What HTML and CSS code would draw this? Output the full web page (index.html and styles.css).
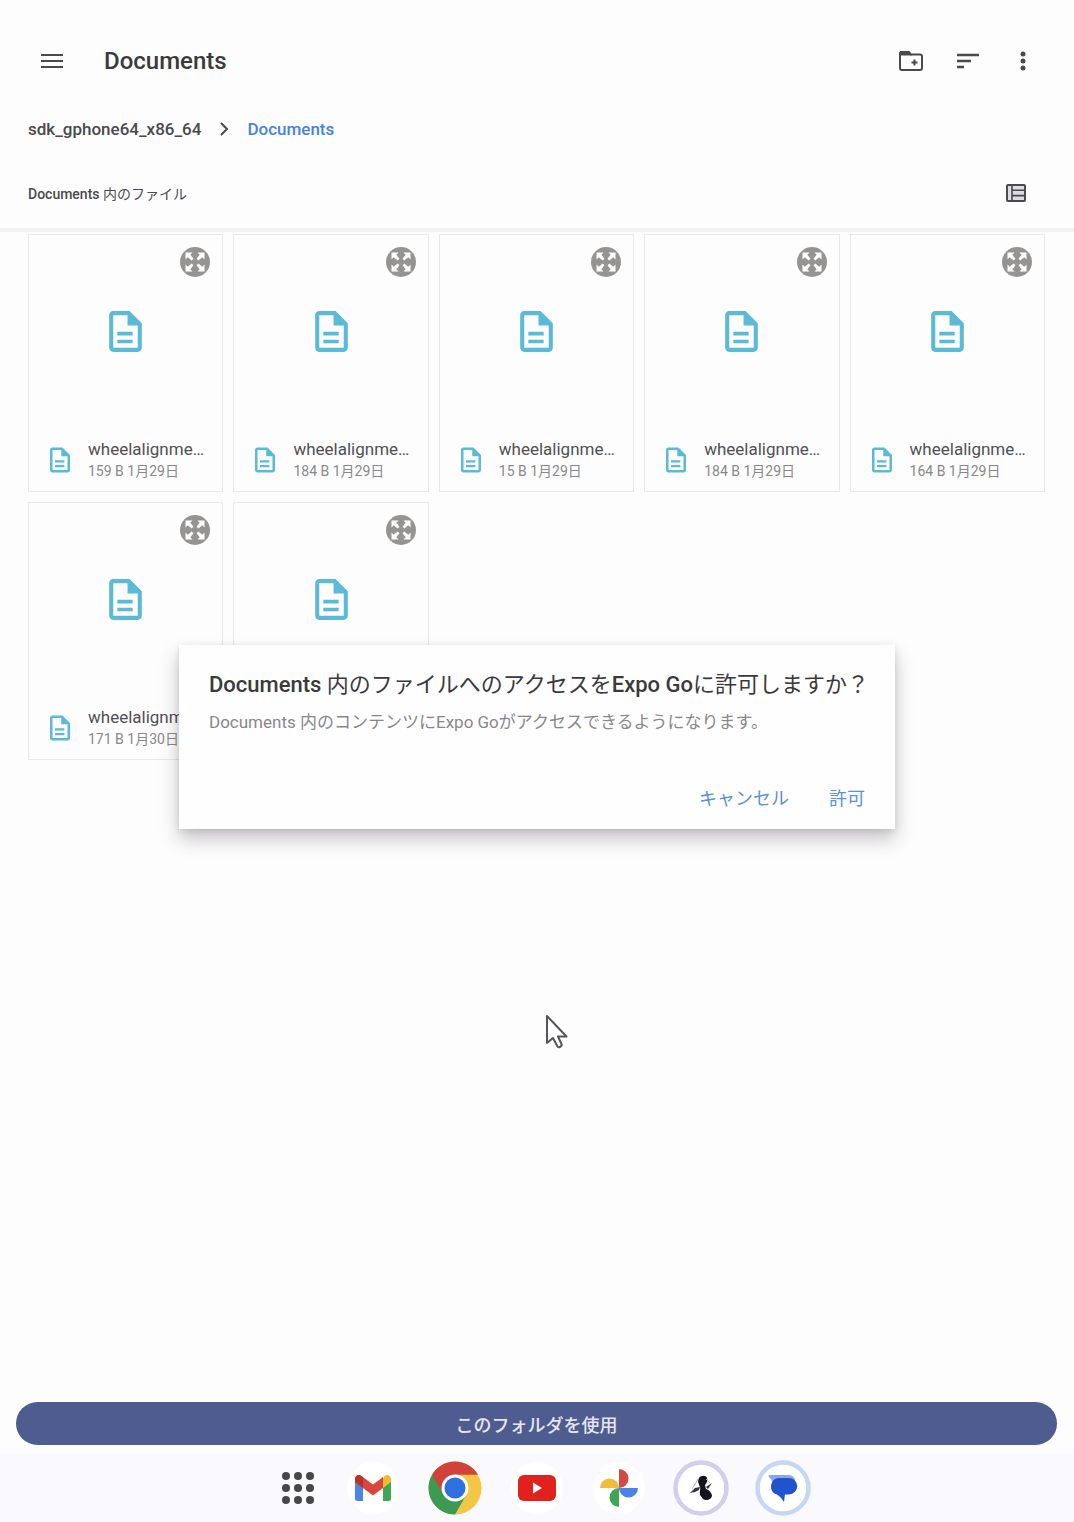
FILE: index.html
```html
<!DOCTYPE html>
<html lang="ja">
<head>
<meta charset="utf-8">
<meta name="viewport" content="width=device-width, initial-scale=1">
<title>Documents</title>
<link rel="stylesheet" href="styles.css">
</head>
<body>
<svg class="sprite" aria-hidden="true">
  <symbol id="doc" viewBox="0 0 24 24"><path d="M8 16h7.500v1.800H8zm0-3.900h7.500v1.800H8zM14 2H6c-1.100 0-2 .9-2 2v16c0 1.100.9 2 2 2h12c1.100 0 2-.9 2-2V8zm4 18H6V4h7v5h5z"/></symbol>
  <symbol id="expand" viewBox="0 0 30 30"><circle cx="15" cy="15" r="15" fill="#969492"/><path d="M5.500 5.500h7L10.300 7.700l3.200 4-1.800 1.800-4-3.200L5.500 12.500zM24.500 5.500v7l-2.200-2.200-4 3.200-1.800-1.800 3.200-4L17.500 5.500zM5.500 24.500v-7l2.200 2.200 4-3.200 1.800 1.800-3.200 4 2.200 2.200zM24.500 24.500h-7l2.200-2.200-3.200-4 1.800-1.800 4 3.200 2.200-2.200z" fill="#fff"/></symbol>
</svg>

<div class="picker">
  <header class="toolbar">
    <button class="icon-btn" aria-label="メニュー"><svg viewBox="0 0 28 28"><path d="M3 8h22M3 14h22M3 20h22" fill="none" stroke="currentColor" stroke-width="2"/></svg></button>
    <h1 class="title">Documents</h1>
    <div class="actions">
      <button class="icon-btn" aria-label="新しいフォルダ"><svg viewBox="0 0 28 28"><path d="M4 5h8l2 2.500h9a2 2 0 0 1 2 2V21a2 2 0 0 1-2 2H5a2 2 0 0 1-2-2V6z" fill="none" stroke="currentColor" stroke-width="2"/><path d="M3 4.500h9l3 4H3z" fill="currentColor"/><path d="M14.500 15.500h6M17.500 12.500v6" stroke="currentColor" stroke-width="2"/></svg></button>
      <button class="icon-btn" aria-label="並べ替え"><svg viewBox="0 0 28 28"><path d="M4 8h22M4 14h14M4 20h7" fill="none" stroke="currentColor" stroke-width="2.500"/></svg></button>
      <button class="icon-btn" aria-label="その他"><svg viewBox="0 0 28 28"><g fill="currentColor"><circle cx="14" cy="7" r="2.500"/><circle cx="14" cy="14" r="2.500"/><circle cx="14" cy="21" r="2.500"/></g></svg></button>
    </div>
  </header>

  <nav class="crumbs" aria-label="パス">
    <a href="#root">sdk_gphone64_x86_64</a>
    <svg class="chevron" viewBox="0 0 10 14"><path d="M2 1l6 6-6 6" fill="none" stroke="currentColor" stroke-width="2"/></svg>
    <a class="current" href="#documents">Documents</a>
  </nav>

  <div class="section-head">
    <h2 class="section-title"><strong>Documents</strong> 内のファイル</h2>
    <button class="icon-btn" aria-label="リスト表示"><svg viewBox="0 0 28 28"><rect x="5" y="6" width="18" height="16" rx="1" fill="#dcdce2" stroke="currentColor" stroke-width="2"/><path d="M10 6v16M10 11.300h13M10 16.600h13" fill="none" stroke="currentColor" stroke-width="1.600"/></svg></button>
  </div>

  <main class="grid">
    <article class="card">
      <button class="expand" aria-label="プレビュー"><svg><use href="#expand"/></svg></button>
      <div class="preview"><svg class="doc-lg"><use href="#doc"/></svg></div>
      <div class="details"><svg class="doc-sm"><use href="#doc"/></svg><div class="text"><p class="name">wheelalignme…</p><p class="meta">159 B 1月29日</p></div></div>
    </article>
    <article class="card">
      <button class="expand" aria-label="プレビュー"><svg><use href="#expand"/></svg></button>
      <div class="preview"><svg class="doc-lg"><use href="#doc"/></svg></div>
      <div class="details"><svg class="doc-sm"><use href="#doc"/></svg><div class="text"><p class="name">wheelalignme…</p><p class="meta">184 B 1月29日</p></div></div>
    </article>
    <article class="card">
      <button class="expand" aria-label="プレビュー"><svg><use href="#expand"/></svg></button>
      <div class="preview"><svg class="doc-lg"><use href="#doc"/></svg></div>
      <div class="details"><svg class="doc-sm"><use href="#doc"/></svg><div class="text"><p class="name">wheelalignme…</p><p class="meta">15 B 1月29日</p></div></div>
    </article>
    <article class="card">
      <button class="expand" aria-label="プレビュー"><svg><use href="#expand"/></svg></button>
      <div class="preview"><svg class="doc-lg"><use href="#doc"/></svg></div>
      <div class="details"><svg class="doc-sm"><use href="#doc"/></svg><div class="text"><p class="name">wheelalignme…</p><p class="meta">184 B 1月29日</p></div></div>
    </article>
    <article class="card">
      <button class="expand" aria-label="プレビュー"><svg><use href="#expand"/></svg></button>
      <div class="preview"><svg class="doc-lg"><use href="#doc"/></svg></div>
      <div class="details"><svg class="doc-sm"><use href="#doc"/></svg><div class="text"><p class="name">wheelalignme…</p><p class="meta">164 B 1月29日</p></div></div>
    </article>
    <article class="card">
      <button class="expand" aria-label="プレビュー"><svg><use href="#expand"/></svg></button>
      <div class="preview"><svg class="doc-lg"><use href="#doc"/></svg></div>
      <div class="details"><svg class="doc-sm"><use href="#doc"/></svg><div class="text"><p class="name">wheelalignme…</p><p class="meta">171 B 1月30日</p></div></div>
    </article>
    <article class="card">
      <button class="expand" aria-label="プレビュー"><svg><use href="#expand"/></svg></button>
      <div class="preview"><svg class="doc-lg"><use href="#doc"/></svg></div>
    </article>
  </main>

  <button class="use-folder">このフォルダを使用</button>

  <div class="overlay">
    <section class="dialog" role="dialog" aria-labelledby="dialog-title">
      <h2 class="dialog-title" id="dialog-title"><strong>Documents</strong> 内のファイルへのアクセスを<strong>Expo Go</strong>に許可しますか？</h2>
      <p class="dialog-body">Documents 内のコンテンツにExpo Goがアクセスできるようになります。</p>
      <div class="dialog-actions">
        <button class="text-btn">キャンセル</button>
        <button class="text-btn">許可</button>
      </div>
    </section>
  </div>

  <svg class="cursor" viewBox="0 0 24 36" aria-hidden="true"><path d="M2 2v27l6-5 4.500 8.500c1 1.500 5 0 4-2.500L13 22.500h8.500z" fill="#fff" stroke="#56565a" stroke-width="2" stroke-linejoin="round"/></svg>
</div>

<footer class="taskbar">
  <button class="apps" aria-label="すべてのアプリ"><svg viewBox="0 0 40 40"><g fill="#47474b"><circle cx="8" cy="8" r="4"/><circle cx="20" cy="8" r="4"/><circle cx="32" cy="8" r="4"/><circle cx="8" cy="20" r="4"/><circle cx="20" cy="20" r="4"/><circle cx="32" cy="20" r="4"/><circle cx="8" cy="32" r="4"/><circle cx="20" cy="32" r="4"/><circle cx="32" cy="32" r="4"/></g></svg></button>
  <button class="app" aria-label="Gmail"><svg viewBox="0 0 54 54"><circle cx="27" cy="27" r="26" fill="#fff"/><path d="M9 18l8 6v16h-5.500A2.500 2.500 0 0 1 9 37.500z" fill="#4c84e8"/><path d="M45 18l-8 6v16h5.500a2.500 2.500 0 0 0 2.500-2.500z" fill="#3fa557"/><path d="M37 17l1.500-2c3-2.500 6.500-.5 6.500 3v3l-8 6z" fill="#f2bb2d"/><path d="M9 21v-3c0-3.500 3.500-5.500 6.500-3L27 23.500 37 16v11l-10 7.500L17 27z" fill="#d9473c"/><path d="M9 21v-3c0-3.500 3.500-5.500 6.500-3l1.500 1.200V27z" fill="#b9322d"/></svg></button>
  <button class="app" aria-label="Chrome"><svg viewBox="0 0 54 54"><circle cx="27" cy="27" r="26.500" fill="#f3c645"/><path d="M27 27L4.050 13.750A26.500 26.500 0 0 0 27 53.500L38.500 33.500z" fill="#3c9a52"/><path d="M4.050 13.750A26.500 26.500 0 0 1 49.950 13.750H27L15.500 33.500z" fill="#d0423a"/><circle cx="27" cy="27" r="13.500" fill="#fff"/><circle cx="27" cy="27" r="10.500" fill="#2f6fe0"/></svg></button>
  <button class="app" aria-label="YouTube"><svg viewBox="0 0 54 54"><circle cx="27" cy="27" r="26" fill="#fff"/><rect x="8" y="14" width="38" height="26" rx="6" fill="#e0211c"/><path d="M23 21.500v11l9-5.500z" fill="#fff"/></svg></button>
  <button class="app" aria-label="フォト"><svg viewBox="0 0 54 54"><circle cx="27" cy="27" r="26" fill="#fff"/><path d="M27 8a9.500 9.500 0 0 1 0 19z" fill="#d5473f"/><path d="M46 27a9.500 9.500 0 0 1-19 0z" fill="#4a82ea"/><path d="M27 46a9.500 9.500 0 0 1 0-19z" fill="#3fa557"/><path d="M8 27a9.500 9.500 0 0 1 19 0z" fill="#efbd3a"/></svg></button>
  <button class="app" aria-label="アプリ"><svg viewBox="0 0 54 54"><circle cx="27" cy="27" r="25.500" fill="#fff" stroke="#d3cdee" stroke-width="4.500"/><path d="M25 17c2-3 7-3 8 0 1 2 0 5-2 7l1 4c3 1 6 4 6 7-1 4-6 5-9 3l-3-4c-1-3 1-6 0-8-1-3-3-6-1-9z" fill="#14141a"/><path d="M26 26l-5 1-5 5 5-1 4-2zM32 26l6-4-4 6z" fill="#33333a"/><path d="M24 18l-6 10M32 18l4 4" stroke="#b5b5ba" stroke-width="1"/></svg></button>
  <button class="app" aria-label="メッセージ"><svg viewBox="0 0 54 54"><circle cx="27" cy="27" r="25.500" fill="#fff" stroke="#c5d7f2" stroke-width="4.500"/><path d="M13 16c-1-2 0-2 2-2h17a8 8 0 0 1 7 4v6H18c-2-4-3-6-5-8z" fill="#86a9ee"/><path d="M23 17h10a8 8 0 0 1 0 16.500h-4c-.500 2-.500 5-1 7.500-2-3-4.500-6-7.500-7.700C12 31 14 17 23 17z" fill="#2054cc"/></svg></button>
</footer>
</body>
</html>
```
FILE: styles.css
```css
* {
  box-sizing: border-box;
}

body {
  margin: 0;
  min-height: 100vh;
  display: flex;
  flex-direction: column;
  background: #fdfdfd;
  color: #4a4a4c;
  font-family: Roboto, "Noto Sans CJK JP", sans-serif;
}

h1, h2, p {
  margin: 0;
}

strong {
  font-weight: 500;
}

button {
  border: 0;
  padding: 0;
  background: none;
  color: inherit;
  font: inherit;
  cursor: pointer;
}

svg {
  display: block;
}

a {
  color: inherit;
  text-decoration: none;
}

.sprite {
  position: absolute;
  width: 0;
  height: 0;
}

.picker {
  position: relative;
  flex: 1;
  display: flex;
  flex-direction: column;
}

.toolbar {
  display: flex;
  align-items: center;
  height: 64px;
  margin-top: 29px;
  padding: 0 37px 0 38px;
}

.icon-btn,
.icon-btn svg {
  width: 28px;
  height: 28px;
}

.title {
  margin-left: 38px;
  font-size: 24px;
  font-weight: 500;
  color: #3a3a3c;
}

.actions {
  display: flex;
  gap: 28px;
  margin-left: auto;
}

.crumbs {
  display: flex;
  align-items: center;
  gap: 18px;
  height: 72px;
  padding: 0 28px;
  font-size: 17px;
  font-weight: 500;
}

.crumbs .current {
  color: #4583dc;
}

.chevron {
  width: 10px;
  height: 14px;
}

.section-head {
  display: flex;
  align-items: center;
  justify-content: space-between;
  height: 67px;
  padding: 0 44px 8px 28px;
  border-bottom: 4px solid #f3f0f1;
}

.section-title {
  font-size: 14px;
  font-weight: 400;
}

.grid {
  display: grid;
  grid-template-columns: repeat(5, minmax(0, 1fr));
  grid-auto-rows: 258px;
  gap: 10px;
  padding: 2px 29px 24px 28px;
  flex: 1;
  align-content: start;
}

.card {
  position: relative;
  display: flex;
  flex-direction: column;
  border: 1px solid #ebe8ea;
}

.expand {
  position: absolute;
  top: 12px;
  right: 12px;
}

.expand svg {
  width: 30px;
  height: 30px;
}

.preview {
  display: flex;
  justify-content: center;
  height: 194px;
  padding-top: 72px;
  color: #5bbad5;
}

.doc-lg {
  width: 49px;
  height: 49px;
  fill: currentColor;
}

.details {
  display: flex;
  align-items: center;
  gap: 13px;
  height: 62px;
  padding: 0 16px;
}

.doc-sm {
  flex: none;
  width: 30px;
  height: 30px;
  fill: #5bbad5;
}

.name {
  font-size: 17px;
  line-height: 22px;
  white-space: nowrap;
  color: #505052;
}

.meta {
  font-size: 14px;
  line-height: 22px;
  white-space: nowrap;
  color: #88888a;
}

.use-folder {
  height: 43px;
  margin: 0 17px 8px 16px;
  border-radius: 22px;
  background: #4f5c8f;
  color: #e4e6f4;
  font-size: 18px;
  font-weight: 500;
}

.overlay {
  position: absolute;
  inset: 0;
  display: flex;
  align-items: center;
  justify-content: center;
  padding-top: 20px;
}

.dialog {
  width: calc(100% * 2 / 3);
  padding: 24px 24px 14px 30px;
  background: #fefefe;
  box-shadow: 0 10px 18px rgba(60, 50, 60, 0.28), 0 2px 6px rgba(60, 50, 60, 0.12);
}

.dialog-title {
  font-size: 22px;
  line-height: 32px;
  font-weight: 400;
  color: #3a3a3c;
}

.dialog-body {
  margin-top: 8px;
  font-size: 17px;
  line-height: 26px;
  color: #88888a;
}

.dialog-actions {
  display: flex;
  justify-content: flex-end;
  gap: 28px;
  margin-top: 44px;
}

.text-btn {
  height: 36px;
  padding: 0 6px;
  color: #5a90dc;
  font-size: 18px;
}

.cursor {
  position: absolute;
  top: 1014px;
  left: 545px;
  width: 24px;
  height: 36px;
}

.taskbar {
  display: flex;
  align-items: center;
  justify-content: center;
  gap: 28px;
  height: 69px;
  padding-left: 14px;
  background: #f9f9fe;
}

.apps svg {
  width: 40px;
  height: 40px;
}

.app svg {
  width: 54px;
  height: 54px;
  overflow: visible;
}
```
